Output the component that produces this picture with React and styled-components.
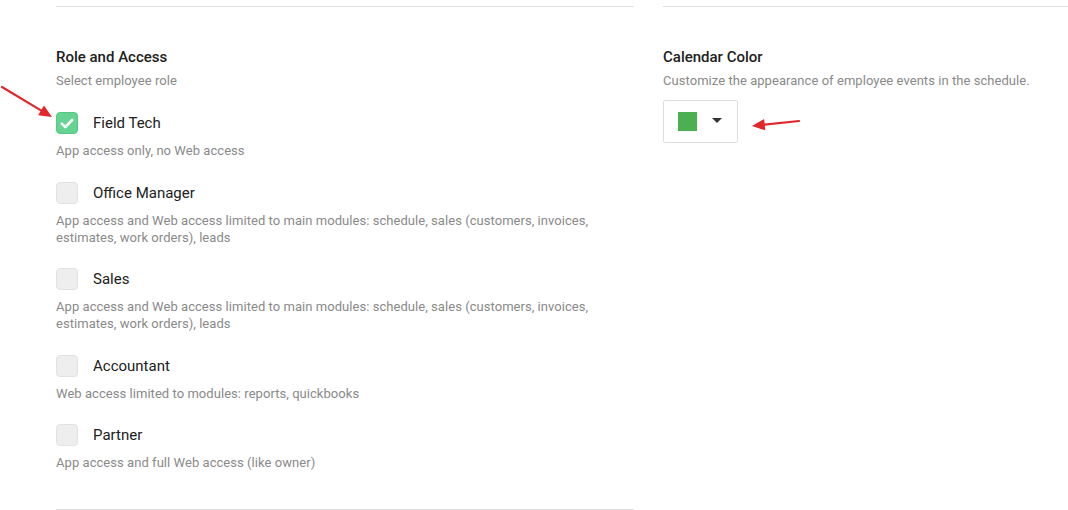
import React, { useState } from 'react';
import styled, { createGlobalStyle } from 'styled-components';

const GlobalStyle = createGlobalStyle`
  html, body {
    margin: 0;
    padding: 0;
    background: #fff;
    font-family: Roboto, "Liberation Sans", Arial, sans-serif;
    overflow: hidden;
  }
`;

const roles = [
  { id: 'field', title: 'Field Tech', description: 'App access only, no Web access' },
  {
    id: 'office',
    title: 'Office Manager',
    description:
      'App access and Web access limited to main modules: schedule, sales (customers, invoices, estimates, work orders), leads',
  },
  {
    id: 'sales',
    title: 'Sales',
    description:
      'App access and Web access limited to main modules: schedule, sales (customers, invoices, estimates, work orders), leads',
  },
  { id: 'accountant', title: 'Accountant', description: 'Web access limited to modules: reports, quickbooks' },
  { id: 'partner', title: 'Partner', description: 'App access and full Web access (like owner)' },
];

function RedArrow({ x1, y1, x2, y2 }) {
  const angle = Math.atan2(y2 - y1, x2 - x1);
  const len = 14;
  const spread = 0.42;
  const ax = x2 - len * Math.cos(angle - spread);
  const ay = y2 - len * Math.sin(angle - spread);
  const bx = x2 - len * Math.cos(angle + spread);
  const by = y2 - len * Math.sin(angle + spread);
  const bodyX = x2 - 10 * Math.cos(angle);
  const bodyY = y2 - 10 * Math.sin(angle);
  return (
    <g>
      <line x1={x1} y1={y1} x2={bodyX} y2={bodyY} stroke="#e3262b" strokeWidth="2.2" strokeLinecap="round" />
      <polygon points={`${x2},${y2} ${ax},${ay} ${bx},${by}`} fill="#e3262b" />
    </g>
  );
}

export default function App() {
  const [role, setRole] = useState('field');

  return (
    <Page>
      <GlobalStyle />
      <Columns>
        <LeftColumn>
          <SectionTitle>Role and Access</SectionTitle>
          <SectionHint>Select employee role</SectionHint>
          <RoleList>
            {roles.map(({ id, title, description }) => (
              <RoleItem key={id}>
                <RoleRow onClick={() => setRole(id)}>
                  <CheckBox checked={role === id}>
                    {role === id && (
                      <svg width="14" height="11" viewBox="0 0 14 11">
                        <path
                          d="M1.8 5.6 L5.3 9 L12.2 2"
                          fill="none"
                          stroke="#fff"
                          strokeWidth="2.6"
                          strokeLinecap="round"
                          strokeLinejoin="round"
                        />
                      </svg>
                    )}
                  </CheckBox>
                  <RoleTitle>{title}</RoleTitle>
                </RoleRow>
                <RoleDescription>{description}</RoleDescription>
              </RoleItem>
            ))}
          </RoleList>
        </LeftColumn>
        <RightColumn>
          <SectionTitle>Calendar Color</SectionTitle>
          <SectionHint>Customize the appearance of employee events in the schedule.</SectionHint>
          <ColorPicker>
            <Swatch color="#4caf50" />
            <Caret />
          </ColorPicker>
        </RightColumn>
      </Columns>
      <Annotations width="1068" height="510" viewBox="0 0 1068 510">
        <RedArrow x1={2} y1={87} x2={52} y2={117} />
        <RedArrow x1={799} y1={121} x2={752} y2={126} />
      </Annotations>
    </Page>
  );
}

const Page = styled.div`
  position: relative;
  width: 1068px;
  height: 510px;
  overflow: hidden;
`;

const Columns = styled.div`
  display: flex;
  gap: 29px;
  padding: 6px 0 0 56px;
`;

const Column = styled.section`
  border-top: 1px solid #e0e0e0;
  padding-top: 40px;
`;

const LeftColumn = styled(Column)`
  width: 578px;
  flex-shrink: 0;
  border-bottom: 1px solid #e0e0e0;
  padding-bottom: 38px;
`;

const RightColumn = styled(Column)`
  flex: 1;
`;

const SectionTitle = styled.h3`
  margin: 0;
  font-size: 15px;
  line-height: 20px;
  font-weight: 500;
  color: #212121;
`;

const SectionHint = styled.p`
  margin: 5px 0 0;
  font-size: 13px;
  line-height: 18px;
  letter-spacing: 0.05px;
  color: #8a8a8a;
`;

const RoleList = styled.ul`
  list-style: none;
  margin: 22px 0 0;
  padding: 0;
  display: flex;
  flex-direction: column;
  gap: 22.5px;
`;

const RoleItem = styled.li`
  display: flex;
  flex-direction: column;
`;

const RoleRow = styled.label`
  display: flex;
  align-items: center;
  gap: 15px;
  cursor: pointer;
`;

const CheckBox = styled.span`
  display: flex;
  align-items: center;
  justify-content: center;
  box-sizing: border-box;
  width: 22px;
  height: 22px;
  border-radius: 4px;
  border: 1px solid ${({ checked }) => (checked ? '#55c983' : '#e2e2e2')};
  background: ${({ checked }) => (checked ? '#65d391' : '#eeeeee')};
`;

const RoleTitle = styled.span`
  font-size: 15px;
  line-height: 22px;
  color: #212121;
`;

const RoleDescription = styled.p`
  margin: 8px 0 0;
  font-size: 13px;
  line-height: 17px;
  letter-spacing: 0.05px;
  color: #8a8a8a;
`;

const ColorPicker = styled.button`
  display: flex;
  align-items: center;
  gap: 15px;
  box-sizing: border-box;
  width: 75px;
  height: 43px;
  margin-top: 10px;
  padding: 0 0 0 14px;
  border: 1px solid #dedede;
  border-radius: 2px;
  background: #fff;
  cursor: pointer;
`;

const Swatch = styled.span`
  width: 19px;
  height: 19px;
  background: ${({ color }) => color};
`;

const Caret = styled.span`
  width: 0;
  height: 0;
  margin-top: -2px;
  border-left: 5px solid transparent;
  border-right: 5px solid transparent;
  border-top: 5px solid #333;
`;

const Annotations = styled.svg`
  position: absolute;
  top: 0;
  left: 0;
  pointer-events: none;
`;
